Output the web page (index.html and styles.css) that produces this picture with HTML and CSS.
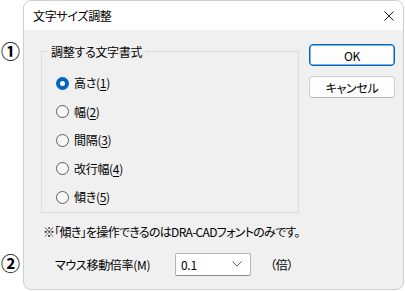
FILE: index.html
```html
<!DOCTYPE html>
<html lang="ja">
<head>
    <meta charset="UTF-8">
    <title>文字サイズ調整</title>
    <link rel="stylesheet" href="styles.css">
</head>
<body>
    <span class="marker marker-1">①</span>
    <span class="marker marker-2">②</span>

    <div class="dialog">
        <div class="titlebar">
            <span class="title">文字サイズ調整</span>
            <svg class="close" viewBox="0 0 10 10" width="10" height="10">
                <path d="M0.5 0.5L9.5 9.5M9.5 0.5L0.5 9.5" stroke="#1a1a1a" stroke-width="1" fill="none" />
            </svg>
        </div>

        <div class="content">
            <div class="top-row">
                <div class="group">
                    <span class="group-title">調整する文字書式</span>
                    <div class="radio-list">
                        <div class="radio-item">
                            <span class="radio checked"></span>
                            <span>高さ(<u>1</u>)</span>
                        </div>
                        <div class="radio-item">
                            <span class="radio"></span>
                            <span>幅(<u>2</u>)</span>
                        </div>
                        <div class="radio-item">
                            <span class="radio"></span>
                            <span>間隔(<u>3</u>)</span>
                        </div>
                        <div class="radio-item">
                            <span class="radio"></span>
                            <span>改行幅(<u>4</u>)</span>
                        </div>
                        <div class="radio-item">
                            <span class="radio"></span>
                            <span>傾き(<u>5</u>)</span>
                        </div>
                    </div>
                </div>

                <div class="buttons">
                    <button class="btn btn-default">OK</button>
                    <button class="btn">キャンセル</button>
                </div>
            </div>

            <p class="note">※「傾き」を操作できるのはDRA-CADフォントのみです。</p>

            <div class="rate-row">
                <span class="rate-label">マウス移動倍率(M)</span>
                <div class="select">
                    <span>0.1</span>
                    <svg viewBox="0 0 10 6" width="10" height="6">
                        <path d="M0.5 0.5L5 5L9.5 0.5" stroke="#606060" stroke-width="1" fill="none" />
                    </svg>
                </div>
                <span class="unit">（倍）</span>
            </div>
        </div>
    </div>
</body>
</html>
```

FILE: styles.css
```css
* {
    margin: 0;
    padding: 0;
    box-sizing: border-box;
}

body {
    font-family: 'Noto Sans CJK JP', 'Noto Sans', sans-serif;
    font-feature-settings: "palt";
    font-size: 12px;
    letter-spacing: -0.3px;
    color: #000;
    background: #fff;
    width: 405px;
    height: 291px;
    position: relative;
    overflow: hidden;
}

.marker {
    position: absolute;
    left: 1px;
    font-size: 19px;
    font-weight: 700;
    line-height: 20px;
    color: #000;
}

.marker-1 {
    top: 41px;
}

.marker-2 {
    top: 253px;
}

.dialog {
    margin-left: 23px;
    width: 381px;
    height: 290px;
    border: 1px solid #cfcfcf;
    border-radius: 8px;
    background: #f0f0f0;
    overflow: hidden;
    display: flex;
    flex-direction: column;
}

.titlebar {
    height: 29px;
    background: #fff;
    display: flex;
    align-items: center;
    justify-content: space-between;
    padding: 0 9px 0 9px;
    flex-shrink: 0;
}

.title {
    font-size: 12px;
    line-height: 16px;
    margin-top: 1px;
}

.close {
    margin-top: 1px;
}

.content {
    padding: 14px 0 0 17px;
}

.top-row {
    display: flex;
    align-items: flex-start;
}

.group {
    margin-top: 7px;
    width: 258px;
    height: 162px;
    border: 1px solid #dcdcdc;
}

.group-title {
    display: inline-block;
    margin: -8px 0 0 6px;
    padding: 0 3px;
    line-height: 16px;
    background: #f0f0f0;
    vertical-align: top;
}

.radio-list {
    display: flex;
    flex-direction: column;
    padding-left: 14px;
}

.radio-item {
    display: flex;
    align-items: center;
    gap: 5px;
    height: 28.5px;
    line-height: 16px;
}

.radio {
    width: 13px;
    height: 13px;
    border: 1px solid #5c5c5c;
    border-radius: 50%;
    background: #f7f7f7;
    flex-shrink: 0;
}

.radio.checked {
    border: none;
    background: #0067c0;
    display: flex;
    align-items: center;
    justify-content: center;
}

.radio.checked::after {
    content: "";
    width: 5px;
    height: 5px;
    border-radius: 50%;
    background: #fff;
}

u {
    text-underline-offset: 2px;
}

.buttons {
    display: flex;
    flex-direction: column;
    gap: 10px;
    margin-left: 10px;
}

.btn {
    width: 86px;
    height: 22px;
    font-family: inherit;
    font-feature-settings: "palt";
    font-size: 12px;
    letter-spacing: -0.3px;
    color: #000;
    background: #fdfdfd;
    border: 1px solid #d0d0d0;
    border-bottom-color: #b8b8b8;
    border-radius: 4px;
}

.btn-default {
    border: 1px solid #0067c0;
    box-shadow: inset 0 0 0 0.5px #0067c0;
}

.note {
    margin-top: 11px;
    margin-left: 2px;
    line-height: 16px;
    letter-spacing: -0.7px;
}

.rate-row {
    display: flex;
    align-items: center;
    margin-top: 13px;
    padding-left: 14px;
    height: 22px;
}

.rate-label {
    width: 120px;
}

.select {
    width: 76px;
    height: 23px;
    background: #fff;
    border: 1px solid #b4b4b4;
    border-bottom-color: #8a8a8a;
    border-radius: 2px;
    display: flex;
    align-items: center;
    justify-content: space-between;
    padding: 0 8px 0 5px;
}

.unit {
    margin-left: 19px;
}
```
